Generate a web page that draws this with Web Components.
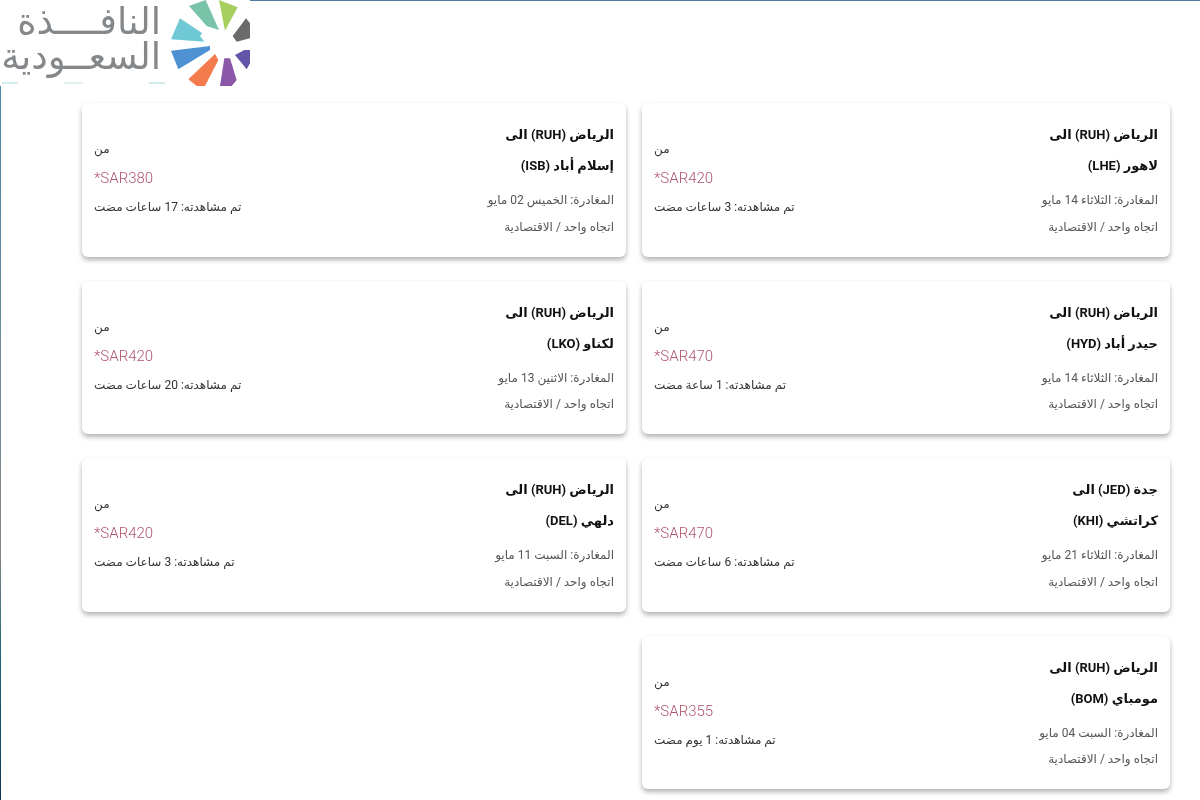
<!DOCTYPE html>
<html lang="ar">
<head>
<meta charset="utf-8">
<title>النافذة السعودية</title>
<style>
  html, body { margin: 0; padding: 0; background: #fff; }
  body { font-family: Roboto, "DejaVu Sans", sans-serif; height: 800px; overflow: hidden; }
</style>
</head>
<body>
<offers-page>
  <site-logo slot="logo"></site-logo>
  <offer-card a="الرياض (RUH) الى" b="لاهور (LHE)" date="المغادرة: الثلاثاء 14 مايو" price="SAR420" seen="تم مشاهدته: 3 ساعات مضت"></offer-card>
  <offer-card a="الرياض (RUH) الى" b="إسلام أباد (ISB)" date="المغادرة: الخميس 02 مايو" price="SAR380" seen="تم مشاهدته: 17 ساعات مضت"></offer-card>
  <offer-card a="الرياض (RUH) الى" b="حيدر أباد (HYD)" date="المغادرة: الثلاثاء 14 مايو" price="SAR470" seen="تم مشاهدته: 1 ساعة مضت"></offer-card>
  <offer-card a="الرياض (RUH) الى" b="لكناو (LKO)" date="المغادرة: الاثنين 13 مايو" price="SAR420" seen="تم مشاهدته: 20 ساعات مضت"></offer-card>
  <offer-card a="جدة (JED) الى" b="كراتشي (KHI)" date="المغادرة: الثلاثاء 21 مايو" price="SAR470" seen="تم مشاهدته: 6 ساعات مضت"></offer-card>
  <offer-card a="الرياض (RUH) الى" b="دلهي (DEL)" date="المغادرة: السبت 11 مايو" price="SAR420" seen="تم مشاهدته: 3 ساعات مضت"></offer-card>
  <offer-card a="الرياض (RUH) الى" b="مومباي (BOM)" date="المغادرة: السبت 04 مايو" price="SAR355" seen="تم مشاهدته: 1 يوم مضت"></offer-card>
</offers-page>
<script>
class OffersPage extends HTMLElement {
  constructor() {
    super();
    this.attachShadow({ mode: "open" }).innerHTML = `
      <style>
        :host { display: block; position: relative; height: 800px; border-top: 1px solid #4f7a9e; box-sizing: border-box; }
        .logo { position: absolute; left: 0; top: -1px; }
        .edge { position: absolute; left: 0; top: 84px; width: 1px; height: 716px;
                background: linear-gradient(#4f8aa8, #6f8a9c 40%, #858585 65%, #1d6a7a 80%, #12344f); }
        .grid {
          direction: rtl;
          display: grid;
          grid-template-columns: 528px 544px;
          column-gap: 16px;
          row-gap: 24px;
          grid-auto-rows: 153.5px;
          padding: 102px 30px 0 0;
          justify-content: start;
        }
      </style>
      <div class="edge"></div>
      <div class="grid"><slot></slot></div>
      <div class="logo"><slot name="logo"></slot></div>`;
  }
}

class SiteLogo extends HTMLElement {
  constructor() {
    super();
    this.attachShadow({ mode: "open" }).innerHTML = `
      <style>
        :host { display: block; width: 250px; height: 86px; background: #fff; overflow: hidden; }
        .wrap { display: flex; width: 250px; height: 86px; position: relative; }
        .name { direction: rtl; width: 161px; margin-right: 4px; color: #85888b; font-size: 37px; line-height: 35px; padding-top: 4px;
                font-family: "DejaVu Sans", sans-serif; white-space: pre-line; text-align: right; filter: blur(.4px); height: 78px; }
        .tag { position: absolute; left: 2px; top: 82px; width: 163px; height: 2px;
               background: linear-gradient(90deg, #b9dfe0 0 10%, transparent 10% 38%, #c9e6e6 38% 50%, transparent 50% 90%, #b9dfe0 90%); opacity: .6; }
        svg { width: 85px; height: 86px; flex: none; filter: blur(.5px); }
      </style>
      <div class="wrap">
        <div class="name">النافــــذة
السعــودية</div>
        <div class="tag"></div>
        <svg viewBox="0 0 255 258">
          <polygon fill="#79c4a8" points="72,18 122,0 162,90 125,78"/>
          <polygon fill="#a6cf5f" points="162,0 218,22 180,92"/>
          <polygon fill="#6b6b6b" points="243,55 255,70 255,115 215,125 203,108"/>
          <polygon fill="#6355a8" points="238,150 255,150 255,190 245,208 210,165"/>
          <polygon fill="#8b57a8" points="178,175 195,175 215,240 200,258 165,258"/>
          <polygon fill="#f47c4c" points="150,162 160,180 120,258 95,258 70,238"/>
          <polygon fill="#4f92d4" points="18,152 135,138 135,150 40,208"/>
          <polygon fill="#6ec9d4" points="45,55 112,100 105,108 118,125 18,118"/>
        </svg>
      </div>`;
  }
}

class OfferCard extends HTMLElement {
  constructor() {
    super();
    this.attachShadow({ mode: "open" });
  }

  connectedCallback() {
    const get = (name) => this.getAttribute(name);
    this.shadowRoot.innerHTML = `
      <style>
        :host { display: block; direction: rtl; background: #fff; border-radius: 6px; box-shadow: 0 3px 5px rgba(0,0,0,.3); }
        .card { display: flex; justify-content: space-between; height: 100%; padding: 0 12px; box-sizing: border-box; filter: blur(.3px); }
        .route { display: flex; flex-direction: column; padding-top: 16px; }
        .route b { font-size: 13px; font-weight: 700; color: #111; line-height: 31px; }
        .route b:nth-child(2) { margin-bottom: 6px; }
        .route span { font-size: 12px; color: #555; line-height: 26.5px; }
        .fare { display: flex; flex-direction: column; align-items: flex-end; padding-top: 32px; color: #333; text-align: left; }
        .fare span { font-size: 12px; line-height: 29px; }
        .fare .price { direction: ltr; color: #b0566e; font-size: 15px; font-weight: 300; }
      </style>
      <div class="card">
        <div class="route">
          <b>${get("a")}</b>
          <b>${get("b")}</b>
          <span>${get("date")}</span>
          <span>اتجاه واحد / الاقتصادية</span>
        </div>
        <div class="fare">
          <span>من</span>
          <span class="price">*${get("price")}</span>
          <span>${get("seen")}</span>
        </div>
      </div>`;
  }
}

customElements.define("offers-page", OffersPage);
customElements.define("site-logo", SiteLogo);
customElements.define("offer-card", OfferCard);
</script>
</body>
</html>
